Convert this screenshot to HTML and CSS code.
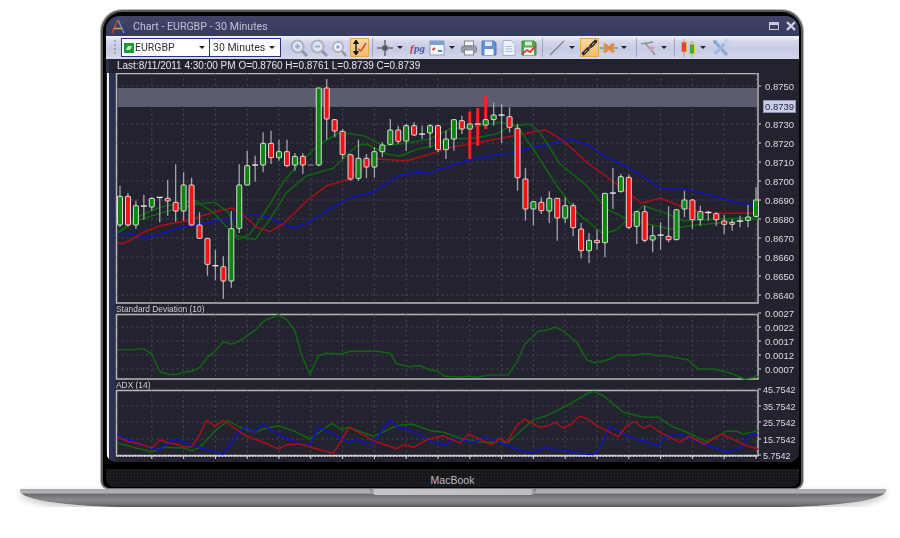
FILE: index.html
```html
<!DOCTYPE html>
<html lang="en">
<head>
    <meta charset="UTF-8">
    <meta name="viewport" content="width=device-width, initial-scale=1.0">
    <title>Chart - EURGBP - 30 Minutes</title>
    <link rel="stylesheet" href="styles.css">
</head>
<body>
    <div class="laptop">
        <div class="lid">
            <div class="screen">
                <!-- Window title -->
                <header class="title-bar">
                    <svg class="app-logo" viewBox="0 0 16 16" width="16" height="16">
                        <path d="M2 15L8 2" stroke="#c8452c" stroke-width="1.6" fill="none"/>
                        <path d="M8 2L14 15" stroke="#6f86b8" stroke-width="1.6" fill="none"/>
                        <path d="M4 10.5H12" stroke="#d9a441" stroke-width="1.4" fill="none"/>
                    </svg>
                    <div class="window-title">Chart - EURGBP - 30 Minutes</div>
                    <svg class="window-btn" viewBox="0 0 10 8" width="10" height="8">
                        <rect x="0.5" y="0.5" width="9" height="7" fill="none" stroke="#c5c9d8" stroke-width="1"/>
                        <rect x="0.5" y="0.5" width="9" height="2.5" fill="#c5c9d8"/>
                    </svg>
                    <svg class="window-btn" viewBox="0 0 10 10" width="10" height="10">
                        <path d="M1 1L9 9M9 1L1 9" stroke="#d4d7e2" stroke-width="2.2"/>
                    </svg>
                </header>

                <!-- Toolbar -->
                <div class="toolbar">
                    <div class="grip"></div>
                    <div class="combo combo-symbol">
                        <svg viewBox="0 0 10 10" width="10" height="10">
                            <rect width="10" height="10" fill="#1f9a2e"/>
                            <path d="M2 7L4 3H8L6 7Z" fill="#bdf0b4"/>
                        </svg>
                        <span class="combo-text">EURGBP</span>
                        <i class="arrow"></i>
                    </div>
                    <div class="combo combo-period">
                        <span class="combo-text">30 Minutes</span>
                        <i class="arrow"></i>
                    </div>

                    <div class="tool-group first-group">
                        <svg class="tool" viewBox="0 0 20 20">
                            <circle cx="8.500" cy="8.500" r="6" fill="#dde5f4" stroke="#b0b3c0" stroke-width="2.200"/>
                            <path d="M6 8.500H11" stroke="#7fa3d2" stroke-width="1.500"/>
                            <path d="M8.500 6V11" stroke="#7fa3d2" stroke-width="1.500"/>
                            <path d="M13 13L18 18" stroke="#94979f" stroke-width="3"/>
                        </svg>
                        <svg class="tool" viewBox="0 0 20 20">
                            <circle cx="8.500" cy="8.500" r="6" fill="#dde5f4" stroke="#b0b3c0" stroke-width="2.200"/>
                            <path d="M6 8.500H11" stroke="#7fa3d2" stroke-width="1.500"/>
                            <path d="M13 13L18 18" stroke="#94979f" stroke-width="3"/>
                        </svg>
                        <svg class="tool" viewBox="0 0 20 20">
                            <circle cx="11.500" cy="9" r="7.500" fill="#d6d7e0"/>
                            <circle cx="9" cy="9" r="5" fill="#eef2fa" stroke="#aeb1bd" stroke-width="1.800"/>
                            <circle cx="9" cy="9" r="1.700" fill="#7fa3d2"/>
                            <path d="M13 13L17 18" stroke="#94979f" stroke-width="2.600"/>
                        </svg>
                        <div class="tool-active">
                            <svg viewBox="0 0 19 19" width="19" height="19">
                                <path d="M6 3V16" stroke="#1a1a1a" stroke-width="1.400"/>
                                <path d="M3.500 5.500L6 2L8.500 5.500ZM3.500 13.500L6 17L8.500 13.500Z" fill="#1a1a1a" stroke="#1a1a1a"/>
                                <path d="M8 11L11 13L16 5" stroke="#e0453a" stroke-width="1.500" fill="none"/>
                            </svg>
                        </div>
                    </div>
                    <div class="sep sep-tight"></div>
                    <div class="tool-group">
                        <svg class="tool" viewBox="0 0 20 20">
                            <path d="M10 2V18M2 10H18" stroke="#6a6c78" stroke-width="1.600"/>
                            <rect x="7.500" y="7.500" width="5" height="5" fill="#55565f"/>
                        </svg>
                        <i class="dd"></i>
                        <svg class="tool fn-tool" viewBox="0 0 20 20">
                            <text x="3" y="14" class="fn-f">f</text>
                            <text x="7" y="14" class="fn-g">pg</text>
                        </svg>
                        <svg class="tool" viewBox="0 0 20 20">
                            <rect x="3" y="3" width="14" height="14" fill="#f4f6fb" stroke="#8aa0c4"/>
                            <rect x="3" y="3" width="14" height="4" fill="#7f9fd0"/>
                            <path d="M5.500 12L8 10" stroke="#d8403a" stroke-width="2"/>
                            <path d="M11 13H15" stroke="#5a7fc0" stroke-width="2"/>
                        </svg>
                        <i class="dd"></i>
                    </div>
                    <div class="tool-group print-group">
                        <svg class="tool" viewBox="0 0 20 20">
                            <rect x="5.500" y="3" width="9" height="5" fill="#f4f4f6" stroke="#85878f"/>
                            <rect x="2.500" y="8" width="15" height="6.500" rx="2" fill="#9c9ea6" stroke="#7d7f88"/>
                            <rect x="5.500" y="12" width="9" height="5" fill="#f8f8fa" stroke="#85878f"/>
                        </svg>
                        <svg class="tool" viewBox="0 0 20 20">
                            <path d="M3 3H15L17 5V17H3Z" fill="#5d93d6" stroke="#4a7cbd"/>
                            <rect x="6" y="3.500" width="7" height="4.500" fill="#dfe7f3"/>
                            <rect x="5.500" y="11" width="9" height="6" fill="#f6f8fc"/>
                        </svg>
                        <svg class="tool" viewBox="0 0 20 20">
                            <path d="M4 2.500H12L16 6.500V17.500H4Z" fill="#eef2fa" stroke="#9fb4d4"/>
                            <path d="M6.500 8.500H13.500M6.500 11H13.500M6.500 13.500H13.500" stroke="#a9bcda"/>
                        </svg>
                        <svg class="tool" viewBox="0 0 20 20">
                            <path d="M3 3H15L17 5V17H3Z" fill="#4fa84a" stroke="#3a8a3a"/>
                            <rect x="6" y="3.500" width="7" height="4" fill="#d7ecd2"/>
                            <rect x="5" y="9.500" width="10" height="7.500" fill="#f6f8f2"/>
                            <path d="M3 16L8 12L11 14L17 8" stroke="#d83a3a" stroke-width="1.800" fill="none"/>
                        </svg>
                    </div>
                    <div class="sep sep-tight"></div>
                    <div class="tool-group line-group">
                        <svg class="tool" viewBox="0 0 20 20">
                            <path d="M3 17L17 3" stroke="#7d7f8a" stroke-width="1.200"/>
                        </svg>
                        <i class="dd"></i>
                        <div class="tool-active link-tool">
                            <svg viewBox="0 0 19 19" width="19" height="19">
                                <path d="M3.500 15.500L8 11M11 8L15.500 3.500" stroke="#2a2a2a" stroke-width="3.600" stroke-linecap="round"/>
                                <path d="M4.500 14.500L7 12M12 7L14.500 4.500" stroke="#e8c48c" stroke-width="1"/>
                                <path d="M7.500 11.500L11.500 7.500" stroke="#444" stroke-width="1.800"/>
                            </svg>
                        </div>
                        <svg class="tool" viewBox="0 0 20 20">
                            <path d="M1 10H19" stroke="#6fa26a" stroke-width="1.400"/>
                            <path d="M5 6L15 14M15 6L5 14" stroke="#e8863a" stroke-width="3"/>
                        </svg>
                        <i class="dd"></i>
                    </div>
                    <div class="sep sep-wide"></div>
                    <div class="tool-group">
                        <svg class="tool" viewBox="0 0 20 20">
                            <path d="M2 6L14 4M6 5L14 14M10 9L16 17" stroke="#7f948a" stroke-width="1.300" fill="none"/>
                            <path d="M9 8L16 9L12 14Z" fill="#d39ac0"/>
                        </svg>
                        <i class="dd"></i>
                    </div>
                    <div class="sep"></div>
                    <div class="tool-group">
                        <svg class="tool" viewBox="0 0 20 20">
                            <path d="M6 1V19M14 3V19" stroke="#9a9ca6"/>
                            <rect x="3.500" y="4" width="5" height="10" rx="1" fill="#e8403a" stroke="#e8b24a"/>
                            <rect x="11.500" y="6" width="5" height="10" rx="1" fill="#45a845" stroke="#e8d24a"/>
                        </svg>
                        <i class="dd"></i>
                        <svg class="tool wrench-tool" viewBox="0 0 20 20">
                            <path d="M4 4L16 17" stroke="#86a8d4" stroke-width="3"/>
                            <path d="M16 3L4 16" stroke="#9db9dc" stroke-width="3"/>
                            <circle cx="15.500" cy="4" r="3" fill="#c2d4ea"/>
                            <circle cx="4" cy="4" r="2" fill="#86a8d4"/>
                        </svg>
                    </div>
                </div>

                <div class="status-line">Last:8/11/2011 4:30:00 PM O=0.8760 H=0.8761 L=0.8739 C=0.8739</div>

                <!-- Chart panels, drawn by script.js in page pixels -->
                <div class="charts">
                    <svg id="priceChart" viewBox="109 74 690 232" width="690" height="232"></svg>
                    <svg id="stdChart" viewBox="109 306 690 76" width="690" height="76"></svg>
                    <svg id="adxChart" viewBox="109 382 690 81" width="690" height="81"></svg>
                </div>
            </div>
            <div class="chin"><span>MacBook</span></div>
        </div>
        <div class="base"><div class="notch"></div></div>
    </div>

    <script src="script.js"></script>
</body>
</html>
```

FILE: styles.css
```css
body {
    margin: 0;
    background: #fff;
    font-family: "Liberation Sans", Arial, sans-serif;
    overflow: hidden;
}

.laptop {
    width: 866px;
    margin: 10px 0 0 20px;
}

/* Lid */
.lid {
    width: 702px;
    height: 479px;
    margin: 1px 0 0 81px;
    box-sizing: border-box;
    background: #000;
    border: 2px solid #59595d;
    border-bottom: 1px solid #77777b;
    border-radius: 21px 21px 8px 8px;
    box-shadow: 0 0 0 1px #bcbcc0;
    padding: 4px 2px 0 3px;
    display: flex;
    flex-direction: column;
}

.screen {
    height: 446px;
    flex-shrink: 0;
    background: #22232e;
    border-radius: 14px 14px 10px 10px;
    overflow: hidden;
    filter: blur(0.45px);
}

.title-bar {
    height: 20px;
    background: linear-gradient(#3f4468, #363a5e);
    display: flex;
    align-items: center;
    padding-left: 4px;
}

.app-logo {
    margin-right: 7px;
}

.window-title {
    flex: 1;
    font-family: Roboto, sans-serif;
    font-size: 10.6px;
    color: #c0c3d4;
}

.window-btn {
    margin-right: 7px;
}

.window-btn:last-child {
    margin-right: 3px;
}

/* Toolbar */
.toolbar {
    height: 23px;
    background: linear-gradient(#f2f3fa, #d3d6ea 25%, #c6cae3 60%, #d6d9ec);
    display: flex;
    align-items: center;
}

.grip {
    width: 2px;
    height: 15px;
    margin: 0 5px 0 8px;
    background: repeating-linear-gradient(#a2a6bd 0 2px, transparent 2px 4px);
}

.combo {
    height: 19px;
    box-sizing: border-box;
    background: #fff;
    border: 1.5px solid #2b2f8c;
    display: flex;
    align-items: center;
    font-family: Roboto, sans-serif;
    font-size: 10.5px;
    color: #333;
}

.combo-symbol {
    width: 89px;
    padding: 0 4px 0 2px;
    gap: 1px;
}

.combo-period {
    width: 72px;
    margin-left: -1px;
    padding: 0 5px 0 3px;
}

.combo-text {
    flex: 1;
    white-space: nowrap;
}

.arrow {
    flex-shrink: 0;
    margin-left: 2px;
    border: 3px solid transparent;
    border-top: 3px solid #222;
    border-bottom: 0;
}

.tool-group {
    display: flex;
    align-items: center;
}

.first-group {
    margin-left: 8px;
}

.print-group {
    margin-left: 2px;
}

.line-group {
    margin-left: 2px;
}

.tool {
    width: 20px;
    height: 20px;
}

.tool-active {
    width: 19px;
    height: 19px;
    margin-left: 1px;
    background: linear-gradient(#fbd9a4, #f6b868);
    box-shadow: inset 0 0 0 1px #e8a550;
}

.link-tool {
    margin-left: 3px;
}

.dd {
    width: 10px;
    height: 3px;
    position: relative;
}

.dd::after {
    content: "";
    position: absolute;
    left: 2px;
    top: 0;
    border: 3px solid transparent;
    border-top: 3px solid #222;
    border-bottom: 0;
}

.fn-tool {
    margin-left: 2px;
}

.fn-f, .fn-g {
    font-family: "Liberation Serif", serif;
    font-style: italic;
    font-weight: bold;
    font-size: 11px;
}

.fn-f {
    fill: #c8333a;
}

.fn-g {
    fill: #3f5fa8;
}

.wrench-tool {
    margin-left: 3px;
}

.sep {
    width: 1px;
    height: 19px;
    margin: 0 3px 0 5px;
    background: #a0a4bc;
}

.sep-tight {
    margin: 0 2px 0 3px;
}

.sep-wide {
    margin: 0 2px 0 7px;
}

.status-line {
    height: 14px;
    padding-left: 11px;
    font-size: 10px;
    line-height: 13px;
    color: #e6e6ea;
    white-space: nowrap;
    background: linear-gradient(90deg, #2b3050 3px, #22232e 3px);
}

/* Chart panels */
.charts {
    margin-left: 1px;
    border-left: 2px solid #f2f2f2;
    display: flex;
    flex-direction: column;
    height: 389px;
}

.charts svg {
    display: block;
    flex-shrink: 0;
    background: linear-gradient(90deg, #2b3050 6px, #22232e 7px);
}

.plot-frame {
    fill: #22232e;
    stroke: #b9b9bd;
    stroke-width: 1.5;
}

.grid-line {
    stroke: #4a4b54;
    stroke-width: 1;
    stroke-dasharray: 2 3;
}

.price-band {
    fill: #5c5c70;
}

.axis-label {
    font-size: 9.5px;
    fill: #dcdce0;
}

.axis-small {
    font-size: 9px;
}

.axis-current {
    fill: #20233a;
}

.axis-current-box {
    fill: #c9cfe8;
    stroke: #8e93b5;
}

.panel-label {
    font-size: 8.4px;
    fill: #d0d0d4;
}

.tick {
    stroke: #d8d8d8;
    stroke-width: 1;
}

.bottom-edge {
    stroke: #f4f4f4;
    stroke-width: 1.5;
    stroke-dasharray: 2 1;
}

.wick {
    stroke: #a3a3ad;
    stroke-width: 1.3;
}

.body-up {
    fill: #0c860c;
    stroke: #dcdcdc;
}

.body-down {
    fill: #f01414;
    stroke: #dcdcdc;
}

.body-doji {
    fill: #f4f4f4;
}

.body-flat {
    fill: #8a8a90;
}

.body-hot {
    fill: #ff2020;
}

.series {
    fill: none;
    stroke-width: 1.5;
    stroke-linejoin: round;
}

.series-green {
    stroke: #126412;
}

.series-red {
    stroke: #a8101a;
}

.series-blue {
    stroke: #1212c4;
}

/* Chin and base */
.chin {
    margin-top: 7px;
    height: 18px;
    box-sizing: border-box;
    padding-top: 3px;
    background-color: #17171c;
    background-image: radial-gradient(#2a2a30 0.6px, transparent 0.8px);
    background-size: 3px 3px;
    border-radius: 0 0 8px 8px;
    display: flex;
    align-items: center;
    justify-content: center;
    font-size: 10.5px;
    color: #bcbcc0;
}

.base {
    width: 866px;
    height: 18px;
    background: linear-gradient(#a9a9ad 0, #b4b4b8 4px, #6c6c70 5px, #8b8b8f 11px, #77777b 15px, #505054);
    border-radius: 0 0 110px 110px / 0 0 16px 16px;
    box-shadow: 0 3px 7px rgba(0, 0, 0, 0.22);
    display: flex;
    justify-content: center;
}

.notch {
    width: 166px;
    height: 6px;
    background: linear-gradient(90deg, #77777b, #c6c6ca 5px, #bdbdc1 161px, #77777b);
    border-radius: 0 0 6px 6px;
}
```

FILE: script.js
```js
// Candles are [wick top, body top, body bottom, wick bottom, kind], measured on a 3x crop
// kinds: g up, r down, d doji, f flat, h hot bar (thin red one under the last price)
const candles = [
    [320, 352, 438, 445, "g"], [342, 352, 438, 442, "r"], [365, 380, 438, 450, "g"], [347, 381, 381, 422, "d"],
    [355, 358, 384, 395, "g"], [355, 355, 355, 430, "d"], [302, 358, 366, 410, "r"], [256, 370, 396, 428, "r"],
    [280, 318, 396, 425, "g"], [296, 318, 438, 440, "r"], [400, 438, 478, 478, "r"], [478, 478, 556, 590, "r"],
    [512, 560, 560, 604, "d"], [532, 563, 606, 660, "r"], [395, 449, 606, 626, "g"], [256, 318, 448, 462, "g"],
    [216, 260, 318, 318, "g"], [230, 258, 258, 308, "d"], [160, 193, 258, 280, "g"], [155, 193, 236, 255, "r"],
    [182, 218, 236, 245, "g"], [182, 218, 260, 265, "r"], [222, 232, 258, 275, "g"], [222, 232, 258, 285, "r"],
    [258, 258, 258, 258, "f"], [27, 27, 258, 262, "g"], [0, 27, 120, 182, "r"], [120, 122, 156, 175, "r"],
    [150, 157, 227, 240, "r"], [225, 227, 300, 305, "r"], [182, 238, 298, 306, "g"], [225, 238, 264, 298, "r"],
    [205, 218, 264, 296, "g"], [190, 198, 218, 235, "g"], [120, 153, 196, 198, "g"], [140, 153, 187, 195, "r"],
    [135, 140, 186, 215, "g"], [130, 140, 168, 170, "r"], [140, 165, 165, 180, "d"], [135, 140, 162, 205, "g"],
    [138, 140, 212, 220, "r"], [155, 180, 212, 240, "g"], [120, 122, 180, 215, "g"], [110, 125, 150, 165, "r"],
    [97, 97, 240, 240, "h"], [87, 87, 200, 200, "h"], [52, 52, 150, 150, "h"], [70, 108, 122, 140, "g"],
    [75, 108, 108, 192, "d"], [85, 113, 145, 160, "r"], [135, 148, 296, 335, "r"], [268, 300, 390, 425, "r"],
    [368, 368, 390, 440, "g"], [355, 370, 395, 405, "r"], [337, 358, 396, 432, "g"], [358, 358, 417, 485, "r"],
    [355, 380, 417, 432, "g"], [372, 380, 446, 472, "r"], [432, 450, 515, 538, "r"], [462, 484, 515, 552, "g"],
    [452, 484, 491, 512, "r"], [343, 343, 491, 535, "g"], [267, 342, 342, 390, "d"], [285, 293, 338, 340, "g"],
    [287, 295, 445, 450, "r"], [395, 398, 442, 495, "g"], [380, 398, 484, 490, "r"], [440, 470, 483, 520, "g"],
    [430, 468, 468, 512, "d"], [382, 472, 482, 490, "r"], [392, 392, 482, 484, "g"], [335, 363, 390, 415, "g"],
    [360, 363, 422, 450, "r"], [380, 398, 422, 440, "g"], [395, 400, 400, 425, "d"], [400, 404, 422, 440, "r"],
    [408, 426, 436, 465, "r"], [420, 430, 436, 455, "g"], [410, 426, 426, 445, "d"], [378, 414, 424, 445, "g"],
    [325, 363, 412, 415, "g"]
];

// small bodies drawn on top of the hot bars: [candle index, top, bottom, kind]
const overlays = [[44, 135, 150, "g"], [45, 135, 135, "d"], [46, 122, 138, "g"]];

// Lines were read from two 3x crops, left one starts at x=100 and right one at x=430
const priceLines = [
    { cls: "series-blue", left: [[52,464],[90,463],[135,477],[170,468],[240,447],[340,428],[400,417],[430,410],[470,407],[510,418],[580,447],[620,433],[680,395],[740,360],[820,338],[900,288],[960,280]],
      right: [[0,280],[100,248],[200,226],[250,222],[300,207],[350,197],[420,180],[470,196],[530,235],[600,268],[690,326],[750,327],[830,345],[900,366],[985,381]] },
    { cls: "series-red", left: [[52,490],[65,495],[90,485],[130,460],[180,440],[260,425],[340,400],[395,387],[430,408],[470,445],[510,458],[550,435],[620,365],[680,320],[750,300],[800,255],[830,240],[920,245]],
      right: [[0,226],[60,205],[110,197],[200,180],[280,165],[345,152],[400,185],[470,250],[560,315],[635,373],[690,357],[760,385],[830,403],[985,403]] },
    { cls: "series-green", left: [[52,462],[110,415],[180,385],[240,372],[285,365],[340,400],[415,482],[450,465],[500,390],[550,310],[600,250],[660,195],[720,160],[790,170],[850,200],[900,195]],
      right: [[0,180],[60,150],[120,145],[210,130],[260,140],[310,210],[380,320],[440,400],[520,465],[560,452],[640,380],[700,400],[760,425],[985,415]] },
    { cls: "series-green", left: [[52,462],[110,425],[190,400],[290,375],[345,370],[385,400],[410,470],[465,482],[510,420],[560,340],[620,290],[700,268],[770,200],[800,195],[860,225],[900,232],[960,208]],
      right: [[0,205],[60,180],[130,178],[200,165],[240,142],[300,135],[330,160],[390,255],[470,320],[530,390],[590,420],[640,432],[720,450],[780,440],[985,420]] }
];

const stdLines = [
    { cls: "series-green", left: [[52,152],[95,152],[130,149],[155,165],[180,218],[205,226],[230,227],[250,219],[275,217],[300,205],[325,172],[345,157],[370,128],[395,136],[420,125],[470,90],[490,67],[535,48],[560,62],[585,95],[605,170],[630,226],[655,170],[680,163],[725,165],[750,157],[830,157],[870,162],[890,195],[930,203],[960,200]],
      right: [[0,212],[20,216],[45,232],[90,235],[110,232],[135,235],[180,228],[235,227],[260,190],[285,135],[325,97],[350,93],[375,85],[400,96],[440,130],[470,182],[495,192],[540,180],[565,167],[610,169],[640,164],[665,165],[685,171],[710,171],[775,183],[805,210],[850,210],[900,222],[945,240],[985,232]] }
];

const adxLines = [
    { cls: "series-green", left: [[52,432],[100,445],[155,458],[190,445],[250,447],[275,455],[300,445],[345,395],[385,365],[420,385],[465,400],[490,390],[535,380],[580,395],[630,420],[695,373],[725,392],[745,385],[820,412],[890,380],[935,375],[985,392]],
      right: [[0,395],[40,400],[90,418],[150,430],[235,430],[310,362],[350,350],[420,315],[470,285],[490,277],[520,290],[580,340],[640,355],[685,355],[730,385],[760,395],[830,428],[890,397],[920,397],[940,405],[985,395]] },
    { cls: "series-blue", left: [[52,405],[75,420],[110,430],[155,447],[180,452],[200,430],[228,420],[280,440],[370,465],[420,395],[440,385],[465,400],[487,376],[540,410],[600,435],[630,440],[655,385],[690,400],[745,430],[770,420],[795,433],[820,432],[868,364],[895,385],[940,398]],
      right: [[0,425],[40,438],[75,420],[135,430],[165,413],[235,440],[260,450],[305,462],[350,445],[375,453],[400,453],[440,463],[490,467],[505,455],[540,382],[610,420],[640,425],[685,440],[710,412],[750,405],[820,435],[895,460],[925,450],[965,402],[985,410]] },
    { cls: "series-red", left: [[52,413],[85,428],[110,432],[155,447],[180,422],[205,432],[230,436],[255,444],[275,443],[300,405],[320,363],[345,382],[370,363],[400,385],[440,412],[490,430],[535,449],[560,437],[600,435],[640,447],[700,463],[748,385],[820,425],[890,449],[912,437],[940,445],[985,420]],
      right: [[0,420],[40,410],[90,432],[115,405],[185,437],[210,418],[232,430],[260,380],[283,360],[330,385],[355,380],[375,370],[400,387],[425,375],[447,352],[470,358],[500,380],[565,413],[590,380],[613,368],[640,388],[660,378],[690,400],[750,430],[775,412],[825,435],[875,405],[950,440],[985,450]] }
];

const LEFT = 116.5, RIGHT = 758;
const gridX = [];
for (let x = 120 + 31.8; x < RIGHT; x += 31.8) gridX.push(x);

function seriesPath(line, oy) {
    const pts = line.left.map(p => [100 + p[0] / 3, oy + p[1] / 3])
        .concat(line.right.map(p => [430 + p[0] / 3, oy + p[1] / 3]));
    return `<polyline class="series ${line.cls}" points="${pts.map(p => p[0].toFixed(1) + "," + p[1].toFixed(1)).join(" ")}"/>`;
}

function frame(top, bottom, ticks) {
    let out = `<rect class="plot-frame" x="${LEFT}" y="${top}" width="${RIGHT - LEFT}" height="${bottom - top}"/>`;
    ticks.forEach(t => {
        out += `<line class="grid-line" x1="${LEFT}" x2="${RIGHT}" y1="${t.y}" y2="${t.y}"/>`;
        out += `<line class="tick" x1="${RIGHT}" x2="${RIGHT + 3}" y1="${t.y}" y2="${t.y}"/>`;
    });
    gridX.forEach(x => {
        out += `<line class="grid-line" x1="${x}" x2="${x}" y1="${top}" y2="${bottom}"/>`;
    });
    return out;
}

function labels(ticks, x, cls) {
    return ticks.map(t => `<text class="axis-label ${cls || ""}" x="${x}" y="${t.y + 3.5}">${t.text}</text>`).join("");
}

function candleMarkup(x, c) {
    const y = v => 80 + v / 3;
    const kind = c[4];
    if (kind === "h") {
        return `<rect class="body-hot" x="${x - 1.5}" y="${y(c[0])}" width="3" height="${(c[3] - c[0]) / 3}"/>`;
    }
    let out = "";
    if (kind !== "f") out += `<line class="wick" x1="${x}" x2="${x}" y1="${y(c[0])}" y2="${y(c[3])}"/>`;
    if (kind === "d") {
        out += `<rect class="body-doji" x="${x - 3}" y="${y(c[1]) - 0.6}" width="6" height="1.3"/>`;
    } else if (kind === "f") {
        out += `<rect class="body-flat" x="${x - 3}" y="${y(c[1]) - 0.5}" width="6" height="1"/>`;
    } else {
        out += `<rect class="${kind === "g" ? "body-up" : "body-down"}" x="${x - 2.5}" y="${y(c[1])}" width="5" height="${(c[2] - c[1]) / 3}" rx="0.6"/>`;
    }
    return out;
}

function drawPrice() {
    const ticks = ["0.8750", "0.8739", "0.8730", "0.8720", "0.8710", "0.8700", "0.8690", "0.8680", "0.8670", "0.8660", "0.8650", "0.8640"];
    const ys = [87, 107, 125, 144, 163, 182, 201, 220, 239, 258, 277, 296];
    const items = ticks.map((text, i) => ({ text, y: ys[i] }));
    const gridded = items.filter(t => t.text !== "0.8739");

    let out = frame(74.5, 304, gridded);
    out += `<rect class="price-band" x="${LEFT + 1}" y="89" width="${RIGHT - LEFT - 2}" height="19"/>`;
    priceLines.forEach(l => { out += seriesPath(l, 80); });
    candles.forEach((c, i) => { out += candleMarkup(120 + 7.95 * i, c); });
    overlays.forEach(o => {
        out += candleMarkup(120 + 7.95 * o[0], [o[1], o[1], o[2], o[2], o[3]]);
    });
    out += `<rect class="axis-current-box" x="763.500" y="101.500" width="32" height="12"/>`;
    out += labels(gridded, 765);
    out += `<text class="axis-label axis-current" x="765" y="110.500">0.8739</text>`;
    document.getElementById("priceChart").innerHTML = out;
}

function drawStd() {
    const items = [["0.0027", 314], ["0.0022", 328], ["0.0017", 342], ["0.0012", 356], ["0.0007", 370]]
        .map(t => ({ text: t[0], y: t[1] }));
    let out = `<text class="panel-label" x="116" y="313">Standard Deviation (10)</text>`;
    out += frame(315.5, 380, items);
    stdLines.forEach(l => { out += seriesPath(l, 300); });
    out += labels(items, 765);
    document.getElementById("stdChart").innerHTML = out;
}

function drawAdx() {
    const items = [["45.7542", 390], ["35.7542", 407], ["25.7542", 423], ["15.7542", 440], ["5.7542", 456]]
        .map(t => ({ text: t[0], y: t[1] }));
    let out = `<text class="panel-label" x="116" y="389">ADX (14)</text>`;
    out += frame(391.5, 456.5, items);
    adxLines.forEach(l => { out += seriesPath(l, 300); });
    out += `<line class="bottom-edge" x1="${LEFT}" x2="${RIGHT}" y1="457" y2="457"/>`;
    gridX.forEach(x => {
        out += `<line class="tick" x1="${x}" x2="${x}" y1="457" y2="460"/>`;
    });
    out += labels(items, 763, "axis-small");
    document.getElementById("adxChart").innerHTML = out;
}

drawPrice();
drawStd();
drawAdx();
```
